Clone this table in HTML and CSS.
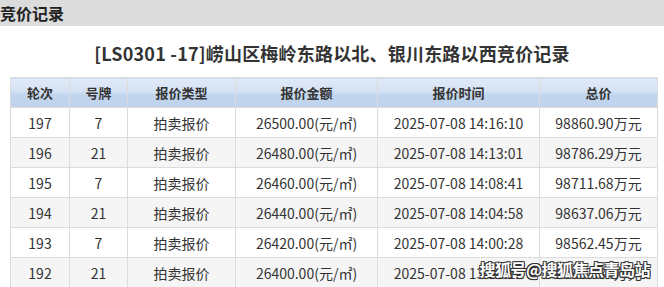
FILE: index.html
```html
<!DOCTYPE html>
<html lang="zh-CN">
<head>
<meta charset="utf-8">
<link rel="stylesheet" href="styles.css">
</head>
<body>
<div class="bar">竞价记录</div>
<h1 class="title">[LS0301 -17]崂山区梅岭东路以北、银川东路以西竞价记录</h1>
<div class="wrap">
<table class="grid">
<colgroup>
<col style="width:59px"><col style="width:58px"><col style="width:108px"><col style="width:142px"><col style="width:162px"><col style="width:118px">
</colgroup>
<thead>
<tr><th>轮次</th><th>号牌</th><th>报价类型</th><th>报价金额</th><th>报价时间</th><th>总价</th></tr>
</thead>
<tbody>
<tr><td>197</td><td>7</td><td>拍卖报价</td><td>26500.00(元/㎡)</td><td>2025-07-08 14:16:10</td><td>98860.90万元</td></tr>
<tr><td>196</td><td>21</td><td>拍卖报价</td><td>26480.00(元/㎡)</td><td>2025-07-08 14:13:01</td><td>98786.29万元</td></tr>
<tr><td>195</td><td>7</td><td>拍卖报价</td><td>26460.00(元/㎡)</td><td>2025-07-08 14:08:41</td><td>98711.68万元</td></tr>
<tr><td>194</td><td>21</td><td>拍卖报价</td><td>26440.00(元/㎡)</td><td>2025-07-08 14:04:58</td><td>98637.06万元</td></tr>
<tr><td>193</td><td>7</td><td>拍卖报价</td><td>26420.00(元/㎡)</td><td>2025-07-08 14:00:28</td><td>98562.45万元</td></tr>
<tr><td>192</td><td>21</td><td>拍卖报价</td><td>26400.00(元/㎡)</td><td>2025-07-08 13:56:12</td><td>98487.84万元</td></tr>
</tbody>
</table>
<div class="mark">搜狐号@搜狐焦点青岛站</div>
</div>
</body>
</html>
```
FILE: styles.css
```css
html, body {
  margin: 0;
  padding: 0;
  background: #fff;
  font-family: "Noto Sans CJK SC", "Noto Sans", sans-serif;
  color: #333;
  overflow: hidden;
}
.bar {
  height: 26px;
  line-height: 26px;
  background: #dcdcdc;
  font-size: 16px;
  font-weight: bold;
  color: #222;
  padding-left: 0;
}
.title {
  margin: 0;
  height: 51px;
  line-height: 54px;
  text-align: center;
  font-size: 18px;
  font-weight: bold;
  color: #333;
  letter-spacing: 0.2px;
}
.wrap {
  position: relative;
  padding-left: 10px;
}
.grid {
  border-collapse: collapse;
  table-layout: fixed;
  width: 648px;
  font-size: 14px;
}
.grid th, .grid td {
  border: 1px solid #dcdcdc;
  height: 29px;
  padding: 0;
  text-align: center;
  white-space: nowrap;
}
.grid th {
  font-size: 13px;
  font-weight: bold;
  color: #333;
  background: linear-gradient(to bottom, #e0eaf8 0%, #d4e2f4 45%, #c2d5ee 55%, #bfd3ed 100%);
}
.grid td {
  color: #333;
}
.grid tbody tr:nth-child(even) td {
  background: #f5f5f5;
}
.mark {
  position: absolute;
  right: 14px;
  top: 180px;
  font-size: 16px;
  font-weight: bold;
  color: #fff;
  letter-spacing: -0.5px;
  text-shadow: 1px 1px 0 #333, -1px -1px 0 #333, 1px -1px 0 #333, -1px 1px 0 #333, 0 1px 1px #000;
}
```
